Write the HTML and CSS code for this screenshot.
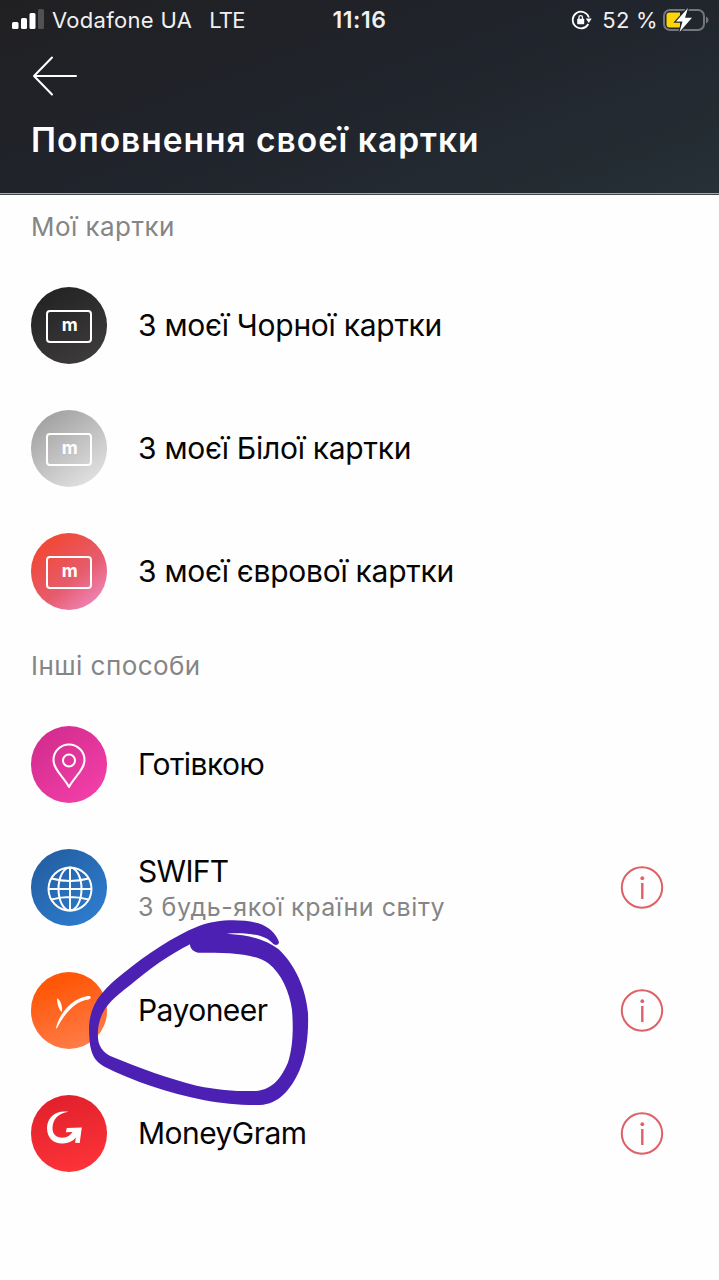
FILE: index.html
```html
<!DOCTYPE html>
<html lang="uk">
<head>
<meta charset="utf-8">
<title>Поповнення своєї картки</title>
<link rel="stylesheet" href="styles.css">
</head>
<body>
<main class="screen">
  <header class="header">
    <div class="status">
      <div class="status-left">
        <svg class="signal" width="32" height="20" viewBox="0 0 32 20" fill="#fff"><rect x="0" y="13" width="6.5" height="7" rx="1.5"/><rect x="9" y="9" width="6" height="11" rx="1.5"/><rect x="17.500" y="4" width="6" height="16" rx="1.500"/><rect x="26" y="0" width="6" height="20" rx="1.500" fill="#505154"/></svg>
        <span class="carrier">Vodafone UA</span>
        <span class="network">LTE</span>
      </div>
      <span class="clock">11:16</span>
      <div class="status-right">
        <svg width="21" height="20" viewBox="0 0 21 20"><path d="M17.300 14A8.300 8.300 0 1 1 17.900 7.500" fill="none" stroke="#fff" stroke-width="1.800"/><path d="M14.800 8.500h5.900l-2.900 4.600z" fill="#fff"/><rect x="6.200" y="8.800" width="7" height="5.400" rx=".8" fill="#fff"/><path d="M7.900 9V7.400a1.800 1.800 0 0 1 3.600 0V9" fill="none" stroke="#fff" stroke-width="1.300"/></svg>
        <span class="percent">52 %</span>
        <svg class="battery" width="46" height="26" viewBox="0 0 46 26"><rect x="1" y="3" width="40" height="20" rx="6" fill="none" stroke="#74767b" stroke-width="2"/><path d="M43 9.500q2.500 1 2.500 3.500t-2.500 3.500z" fill="#74767b"/><path d="M6.500 5.500H17V20.500H6.500a3 3 0 0 1-3-3v-9a3 3 0 0 1 3-3z" fill="#fcd50b"/><path d="M25 1L13 14.500h6.500L16.500 25 29 10.800H22z" fill="#fff" stroke="#22262d" stroke-width="2.400" paint-order="stroke"/></svg>
      </div>
    </div>
    <svg class="back" width="46" height="40" viewBox="0 0 46 40" fill="none" stroke="#fff" stroke-width="2" stroke-linecap="round" stroke-linejoin="round"><path d="M20 1.500L2 20l18 18.500M2 20h42"/></svg>
    <h1 class="title">Поповнення своєї картки</h1>
  </header>

  <h2 class="section">Мої картки</h2>
  <ul class="list">
    <li class="row"><span class="icon black"><span class="card">m</span></span><span class="label">З моєї Чорної картки</span></li>
    <li class="row"><span class="icon white"><span class="card">m</span></span><span class="label">З моєї Білої картки</span></li>
    <li class="row"><span class="icon euro"><span class="card">m</span></span><span class="label">З моєї єврової картки</span></li>
  </ul>

  <h2 class="section other">Інші способи</h2>
  <ul class="list">
    <li class="row">
      <span class="icon cash"><svg width="76" height="76" viewBox="0 0 76 76" fill="none" stroke="#fff" stroke-width="2"><path d="M38 60C33 50 22.500 43 22.500 33a15.500 15.500 0 0 1 31 0C53.500 43 43 50 38 60z" stroke-linejoin="round"/><circle cx="38" cy="33.500" r="6"/></svg></span>
      <span class="label tight">Готівкою</span>
    </li>
    <li class="row">
      <span class="icon swift"><svg width="76" height="76" viewBox="0 0 76 76" fill="none" stroke="#fff" stroke-width="2"><circle cx="39" cy="39" r="21.500"/><ellipse cx="39" cy="39" rx="11.500" ry="21.500"/><path d="M39 17.500v43M17.500 39h43M20.500 28.500q18.500 5 37 0M20.500 49.500q18.500-5 37 0"/></svg></span>
      <span class="texts"><span class="label swift-label">SWIFT</span><span class="sub">З будь-якої країни світу</span></span>
      <svg class="info" width="44" height="44" viewBox="0 0 44 44"><circle cx="22" cy="21.500" r="20.200" fill="none" stroke="#df6066" stroke-width="2"/><circle cx="22.300" cy="12.200" r="1.900" fill="#df6066"/><path d="M22.300 17v16" stroke="#df6066" stroke-width="2.400"/></svg>
    </li>
    <li class="row">
      <span class="icon payoneer"><svg width="76" height="76" viewBox="0 0 76 76" fill="#fff"><path d="M24.800 55.500C29 39 41 26 56 23.200c4.500-.7 5 2.400 1.500 3.200C44 28 34 40 26.300 54.500c-.5 1-1 1.300-1.500 1zM26.300 25.200c3.600 2.500 5.600 8 4.300 14C27.800 36 25.500 30 26.300 25.200z"/></svg></span>
      <span class="label tight">Payoneer</span>
      <svg class="info" width="44" height="44" viewBox="0 0 44 44"><circle cx="22" cy="21.500" r="20.200" fill="none" stroke="#df6066" stroke-width="2"/><circle cx="22.300" cy="12.200" r="1.900" fill="#df6066"/><path d="M22.300 17v16" stroke="#df6066" stroke-width="2.400"/></svg>
    </li>
    <li class="row">
      <span class="icon moneygram"><svg width="76" height="76" viewBox="0 0 76 76" fill="#fff"><path d="M37.500 15.800C25 13.500 16 21.500 16 32c0 10 6.500 15.800 16 15.500 5.500-.2 10-2.500 13-6l-1 5.300 4.700.2L50.800 31.600 35.800 32l-1 4.300 6.700-.2C39 40 36 41.800 31.500 41.800c-6.500 0-10.300-4-10-10.300C21.900 23 28 17 37.500 15.800z"/></svg></span>
      <span class="label tight">MoneyGram</span>
      <svg class="info" width="44" height="44" viewBox="0 0 44 44"><circle cx="22" cy="21.500" r="20.200" fill="none" stroke="#df6066" stroke-width="2"/><circle cx="22.300" cy="12.200" r="1.900" fill="#df6066"/><path d="M22.300 17v16" stroke="#df6066" stroke-width="2.400"/></svg>
    </li>
  </ul>

  <!-- Hand-drawn highlight around Payoneer -->
  <svg class="scribble" width="300" height="220" viewBox="0 0 900 660"><path fill="#4c20b3" fill-rule="evenodd" d="M776 124C768 102 750 82 715 70C660 56 590 58 535 79C460 109 380 163 310 220C250 268 208 310 207 385C208 445 214 480 255 501C340 543 440 578 550 600C610 611 660 616 720 615C775 612 812 570 838 512C860 462 866 400 864 340C858 265 825 195 776 148C735 118 690 105 620 101C680 97 735 103 758 130C765 139 780 135 776 124ZM510 133C450 163 385 209 330 256C275 298 240 328 234 390C231 430 240 454 280 472C360 505 440 535 530 557C600 571 650 574 710 573C760 568 784 532 803 490C820 440 820 380 816 330C808 275 785 222 745 190C700 158 620 158 535 158C520 156 510 146 510 133Z"/></svg>
</main>
</body>
</html>
```
FILE: styles.css
```css
* { box-sizing: border-box; }
body { margin: 0; background: #fff; font-family: Inter, "Noto Sans", sans-serif; color: #050505; }
.screen { position: relative; width: 719px; height: 1280px; overflow: hidden; background: #fefefe; }
.header { height: 195px; background: linear-gradient(160deg, #202022 0%, #20242c 50%, #263036 100%); border-bottom: 1px solid #44474b; box-shadow: inset 0 -1px #a5a8aa; color: #fff; }
.status { height: 40px; display: grid; grid-template-columns: 1fr auto 1fr; align-items: center; padding: 0 11px 0 12px; font-size: 22px; color: #f0f0f1; }
.status-left, .status-right { display: flex; align-items: center; }
.status-right { justify-content: flex-end; }
.signal { margin-top: -2px; }
.carrier { margin-left: 8px; letter-spacing: .3px; }
.network { margin-left: 17px; letter-spacing: -.7px; }
.clock { font-size: 23px; font-weight: 600; letter-spacing: .6px; margin-right: 1px; }
.percent { margin: 0 5px 0 10px; letter-spacing: .3px; }
.status-right { position: relative; left: 1px; }
.battery { margin-top: -1px; }
.back { display: block; margin: 16px 0 0 32px; }
.title { margin: 21px 0 0 31px; font-size: 33.5px; line-height: 46px; font-weight: 600; letter-spacing: 1px; white-space: nowrap; }
.section { margin: 0; padding: 13px 0 0 31px; height: 69px; font-size: 26px; line-height: 37px; font-weight: 400; color: #858585; letter-spacing: .45px; }
.other { height: 70px; padding-top: 14px; }
.list { list-style: none; margin: 0; padding: 0; }
.row { height: 123px; display: flex; align-items: center; padding: 0 55px 0 30.500px; }
.icon { width: 76.5px; height: 76.5px; flex: none; margin-right: 31px; border-radius: 50%; display: flex; align-items: center; justify-content: center; }
.icon svg { flex: none; }
.card { width: 46px; height: 33px; border: 2px solid #fff; border-radius: 4px; text-align: center; font-size: 17.5px; line-height: 25px; font-weight: 700; color: #fff; margin-top: 2px; padding-left: 2px; }
.black { background: linear-gradient(150deg, #202020, #413e40); }
.white { background: linear-gradient(145deg, #a0a0a0 10%, #e6e6e6 95%); }
.euro { background: linear-gradient(140deg, #f04a3b 20%, #e65c6c 58%, #f18cc6 95%); }
.cash { background: linear-gradient(140deg, #cf298b, #f642ab); }
.swift { background: linear-gradient(140deg, #225b9d, #2f80d4); }
.payoneer { background: linear-gradient(160deg, #ff5708 20%, #ff8253); }
.moneygram { background: linear-gradient(165deg, #df1f2b, #ff353a); }
.label { font-size: 30px; line-height: 38px; white-space: nowrap; letter-spacing: -.27px; margin-bottom: 2px; }
.tight { letter-spacing: -.55px; }
.swift-label { letter-spacing: -.7px; margin-bottom: 0; }
.texts { display: flex; flex-direction: column; margin-top: 1px; }
.sub { font-size: 25px; line-height: 34px; color: #858585; white-space: nowrap; letter-spacing: .57px; }
.info { margin-left: auto; }
.scribble { position: absolute; left: 20px; top: 900px; }
```
